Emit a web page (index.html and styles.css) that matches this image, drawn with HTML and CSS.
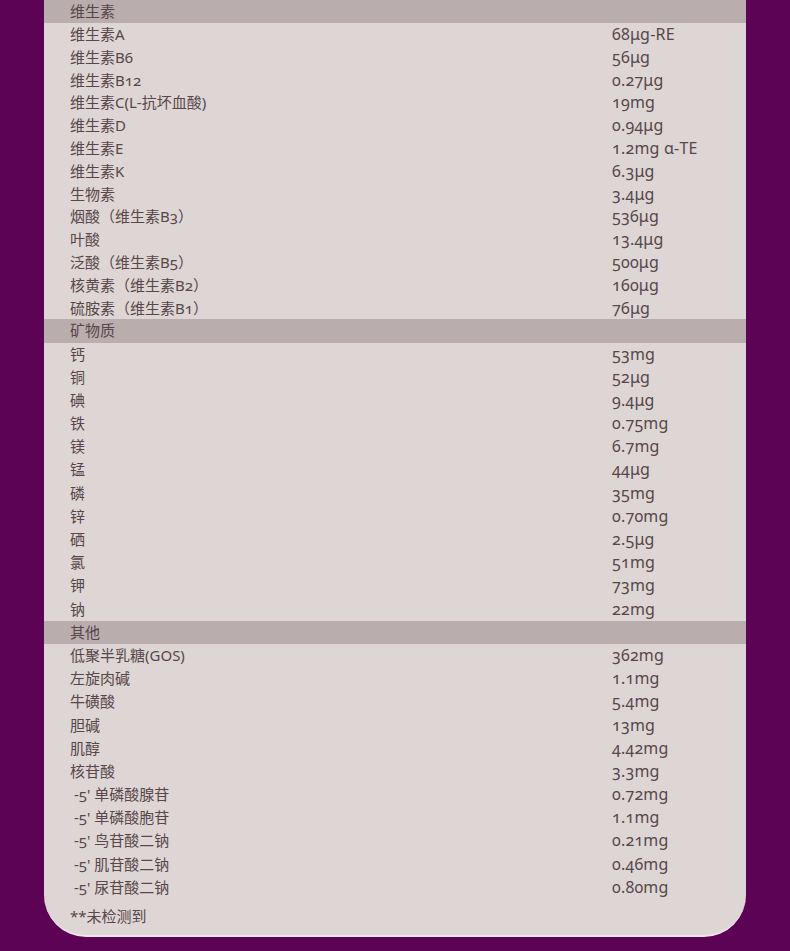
FILE: index.html
```html
<!DOCTYPE html>
<html lang="zh-CN">
<head>
<meta charset="utf-8">
<title>营养成分</title>
<link rel="stylesheet" href="styles.css">
</head>
<body>
<div class="page">
  <div class="card">
    <section class="group g1">
      <div class="row head"><span>维生素</span><span></span></div>
      <div class="row"><span>维生素A</span><span class="v">68μg-RE</span></div>
      <div class="row"><span>维生素B6</span><span class="v">56μg</span></div>
      <div class="row"><span>维生素B12</span><span class="v">0.27μg</span></div>
      <div class="row"><span>维生素C(L-抗坏血酸)</span><span class="v">19mg</span></div>
      <div class="row"><span>维生素D</span><span class="v">0.94μg</span></div>
      <div class="row"><span>维生素E</span><span class="v">1.2mg α-TE</span></div>
      <div class="row"><span>维生素K</span><span class="v">6.3μg</span></div>
      <div class="row"><span>生物素</span><span class="v">3.4μg</span></div>
      <div class="row"><span>烟酸（维生素B3）</span><span class="v">536μg</span></div>
      <div class="row"><span>叶酸</span><span class="v">13.4μg</span></div>
      <div class="row"><span>泛酸（维生素B5）</span><span class="v">500μg</span></div>
      <div class="row"><span>核黄素（维生素B2）</span><span class="v">160μg</span></div>
      <div class="row"><span>硫胺素（维生素B1）</span><span class="v">76μg</span></div>
    </section>
    <section class="group">
      <div class="row head"><span>矿物质</span><span></span></div>
      <div class="row"><span>钙</span><span class="v">53mg</span></div>
      <div class="row"><span>铜</span><span class="v">52μg</span></div>
      <div class="row"><span>碘</span><span class="v">9.4μg</span></div>
      <div class="row"><span>铁</span><span class="v">0.75mg</span></div>
      <div class="row"><span>镁</span><span class="v">6.7mg</span></div>
      <div class="row"><span>锰</span><span class="v">44μg</span></div>
      <div class="row"><span>磷</span><span class="v">35mg</span></div>
      <div class="row"><span>锌</span><span class="v">0.70mg</span></div>
      <div class="row"><span>硒</span><span class="v">2.5μg</span></div>
      <div class="row"><span>氯</span><span class="v">51mg</span></div>
      <div class="row"><span>钾</span><span class="v">73mg</span></div>
      <div class="row"><span>钠</span><span class="v">22mg</span></div>
    </section>
    <section class="group">
      <div class="row head"><span>其他</span><span></span></div>
      <div class="row"><span>低聚半乳糖(GOS)</span><span class="v">362mg</span></div>
      <div class="row"><span>左旋肉碱</span><span class="v">1.1mg</span></div>
      <div class="row"><span>牛磺酸</span><span class="v">5.4mg</span></div>
      <div class="row"><span>胆碱</span><span class="v">13mg</span></div>
      <div class="row"><span>肌醇</span><span class="v">4.42mg</span></div>
      <div class="row"><span>核苷酸</span><span class="v">3.3mg</span></div>
      <div class="row sub"><span>-5' 单磷酸腺苷</span><span class="v">0.72mg</span></div>
      <div class="row sub"><span>-5' 单磷酸胞苷</span><span class="v">1.1mg</span></div>
      <div class="row sub"><span>-5' 鸟苷酸二钠</span><span class="v">0.21mg</span></div>
      <div class="row sub"><span>-5' 肌苷酸二钠</span><span class="v">0.46mg</span></div>
      <div class="row sub"><span>-5' 尿苷酸二钠</span><span class="v">0.80mg</span></div>
    </section>
    <div class="note">**未检测到</div>
  </div>
</div>
</body>
</html>
```
FILE: styles.css
```css
html, body {
  margin: 0;
  padding: 0;
  background: #5d0356;
}
.page {
  width: 790px;
  height: 951px;
  padding: 0 44px;
  box-sizing: border-box;
  overflow: hidden;
}
.card {
  background: #ddd6d5;
  border-radius: 0 0 42px 42px;
  height: 937px;
  box-sizing: border-box;
  border-bottom: 2px solid #eee6e8;
  font-family: "Noto Sans", "Noto Sans CJK SC", sans-serif;
  font-variant-numeric: oldstyle-nums;
  font-size: 15px;
  color: #584649;
}
.row {
  display: grid;
  grid-template-columns: 542px 1fr;
  height: 23.2px;
  line-height: 23.2px;
  padding-left: 26px;
  white-space: nowrap;
}
.g1 .row {
  height: 22.8px;
  line-height: 22.8px;
}
.g1 .row.head {
  height: 23px;
  line-height: 23px;
}
.head {
  background: #b9adae;
}
.v {
  font-size: 16px;
  letter-spacing: 0.2px;
}
.sub span:first-child {
  padding-left: 4px;
}
.note {
  padding-left: 26px;
  margin-top: 6px;
  line-height: 23px;
}
```
